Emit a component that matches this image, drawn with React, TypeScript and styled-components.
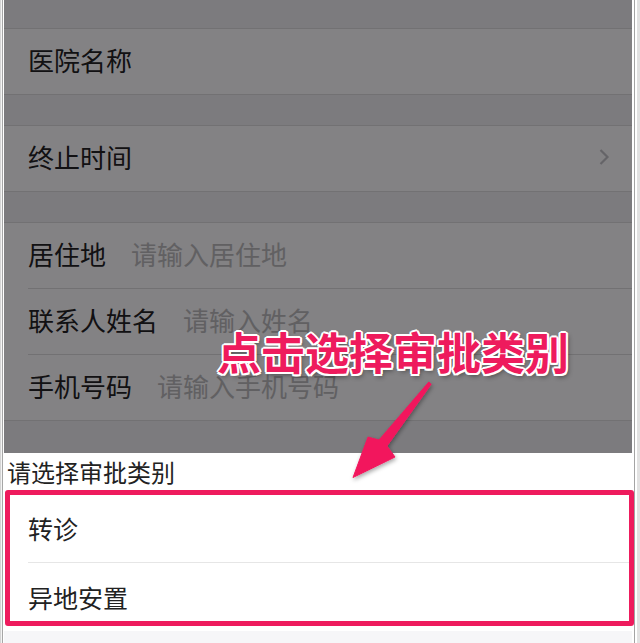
import React from "react";
import styled, { createGlobalStyle } from "styled-components";

const GlobalStyle = createGlobalStyle`
  * { box-sizing: border-box; }
  html, body { margin: 0; padding: 0; background: #fff; }
  body { font-family: "Noto Sans CJK SC", "Noto Sans", sans-serif; }
`;

const Shell = styled.div`
  position: relative;
  width: 640px;
  height: 643px;
  display: flex;
  overflow: hidden;
  background: #fff;
`;

const RailLeft = styled.div`
  width: 4px;
  flex: none;
  background: linear-gradient(to right, #d4d4d4 0 1px, #f4f4f4 1px 2px, #a6a6a6 2px 3px, #fff 3px 4px);
`;

const RailRight = styled.div`
  width: 8px;
  flex: none;
  background: linear-gradient(to right, #fff 0 2px, #a4a4a4 2px 3px, #fff 3px 5px, #e2e2e2 5px 8px);
`;

const Screen = styled.div`
  flex: 1;
  display: flex;
  flex-direction: column;
  background: #f2f2f4;
`;

const Form = styled.div`
  position: relative;
  height: 453px;
  flex: none;
  overflow: hidden;
  &::after {
    content: "";
    position: absolute;
    inset: 0;
    background: rgba(2, 0, 4, 0.49);
  }
`;

const Band = styled.div<{ $h: number }>`
  height: ${(p) => p.$h}px;
`;

const Group = styled.div`
  background: #fff;
  border-top: 1px solid #dedede;
  border-bottom: 1px solid #dedede;
`;

const Row = styled.div`
  height: 65px;
  display: flex;
  align-items: center;
  padding: 0 22px 4px 24px;
  font-size: 26px;
  color: #222;
`;

const RowInset = styled.div`
  margin-left: 24px;
  border-top: 1px solid #dedede;
`;

const Label = styled.span`
  flex: none;
`;

const Placeholder = styled.span`
  margin-left: 25px;
  color: #bdbdbd;
`;

const Chevron = styled.svg`
  margin-left: auto;
  width: 12px;
  height: 18px;
`;

const Sheet = styled.div`
  flex: 1;
  display: flex;
  flex-direction: column;
  background: #fff;
`;

const SheetTitle = styled.div`
  height: 41px;
  line-height: 38px;
  padding-left: 3px;
  font-size: 24px;
  color: #222;
`;

const Option = styled.div`
  height: 68px;
  display: flex;
  align-items: center;
  padding-left: 24px;
  font-size: 25px;
  color: #222;
`;

const OptionSep = styled.div`
  margin-left: 24px;
  border-top: 1px solid #e6e6e6;
`;

const SheetFooter = styled.div`
  flex: 1;
  background: #f6f6f8;
`;

const Highlight = styled.div`
  position: absolute;
  left: 5px;
  top: 490px;
  width: 629px;
  height: 136px;
  border: 5px solid #ee1b5d;
  border-radius: 3px;
  pointer-events: none;
`;

const Callout = styled.div`
  position: absolute;
  left: 217px;
  top: 329px;
  font-size: 44px;
  line-height: 44px;
  font-weight: 700;
  color: #ee1b5d;
  white-space: nowrap;
  text-shadow:
    2px 0 0 #fff, -2px 0 0 #fff, 0 2px 0 #fff, 0 -2px 0 #fff,
    1.5px 1.5px 0 #fff, -1.5px 1.5px 0 #fff, 1.5px -1.5px 0 #fff, -1.5px -1.5px 0 #fff,
    2px 3px 5px rgba(0, 0, 0, 0.45);
`;

const ArrowLayer = styled.svg`
  position: absolute;
  left: 0;
  top: 0;
  width: 640px;
  height: 643px;
  pointer-events: none;
`;

const fields: { label: string; placeholder: string }[] = [
  { label: "居住地", placeholder: "请输入居住地" },
  { label: "联系人姓名", placeholder: "请输入姓名" },
  { label: "手机号码", placeholder: "请输入手机号码" },
];

const options = ["转诊", "异地安置"];

export default function App() {
  return (
    <>
      <GlobalStyle />
      <Shell>
        <RailLeft />
        <Screen>
          <Form>
            <Band $h={28} />
            <Group>
              <Row>
                <Label>医院名称</Label>
              </Row>
            </Group>
            <Band $h={30} />
            <Group>
              <Row>
                <Label>终止时间</Label>
                <Chevron viewBox="0 0 12 18">
                  <path d="M2.5 2 L9.5 9 L2.5 16" fill="none" stroke="#c4c4c8" strokeWidth="2.2" />
                </Chevron>
              </Row>
            </Group>
            <Band $h={30} />
            <Group>
              {fields.map((f, i) => (
                <React.Fragment key={f.label}>
                  {i > 0 && <RowInset />}
                  <Row>
                    <Label>{f.label}</Label>
                    <Placeholder>{f.placeholder}</Placeholder>
                  </Row>
                </React.Fragment>
              ))}
            </Group>
          </Form>
          <Sheet>
            <SheetTitle>请选择审批类别</SheetTitle>
            {options.map((o, i) => (
              <React.Fragment key={o}>
                {i > 0 && <OptionSep />}
                <Option>{o}</Option>
              </React.Fragment>
            ))}
            <SheetFooter />
          </Sheet>
        </Screen>
        <RailRight />
        <Highlight />
        <Callout>点击选择审批类别</Callout>
        <ArrowLayer viewBox="0 0 640 643">
          <defs>
            <filter id="arrowShadow" x="-20%" y="-20%" width="140%" height="140%">
              <feDropShadow dx="1" dy="2" stdDeviation="2" floodColor="#000" floodOpacity="0.35" />
            </filter>
          </defs>
          <polygon
            points="428.8,382 431.2,384.2 387,446 395,457 353,477.5 368,437 379,440"
            fill="#f2175d"
            stroke="#f2175d"
            strokeWidth="1"
            strokeLinejoin="round"
            filter="url(#arrowShadow)"
          />
        </ArrowLayer>
      </Shell>
    </>
  );
}
